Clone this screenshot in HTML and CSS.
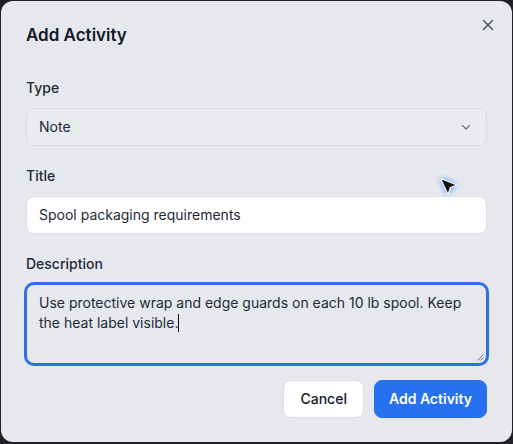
FILE: index.html
```html
<!DOCTYPE html>
<html lang="en">
<head>
<meta charset="utf-8">
<title>Add Activity</title>
<link rel="stylesheet" href="styles.css">
</head>
<body>
<div class="dialog" role="dialog" aria-labelledby="dlg-title">
  <h2 class="dialog-title" id="dlg-title">Add Activity</h2>
  <button class="close-btn" aria-label="Close">
    <svg viewBox="0 0 16 16" width="16" height="16"><path d="M3.5 3.5l9 9M12.5 3.5l-9 9" stroke="currentColor" stroke-width="1.5" stroke-linecap="round" fill="none"/></svg>
  </button>
  <form class="form">
    <div class="field">
      <label class="label">Type</label>
      <div class="select">
        <span>Note</span>
        <svg class="chevron" viewBox="0 0 16 16" width="16" height="16"><path d="M4.5 6.5l3.5 3.5 3.5-3.5" stroke="currentColor" stroke-width="1.2" stroke-linecap="round" stroke-linejoin="round" fill="none"/></svg>
      </div>
    </div>
    <div class="field">
      <label class="label">Title</label>
      <div class="input">Spool packaging requirements</div>
    </div>
    <div class="field">
      <label class="label">Description</label>
      <div class="textarea">Use protective wrap and edge guards on each 10 lb spool. Keep the heat label visible.<span class="caret"></span>
        <svg class="grip" viewBox="0 0 8 8" width="8" height="8"><path d="M7.5 1.5l-6 6M7.5 4.5l-3 3" stroke="#6b7280" stroke-width="1" fill="none"/></svg>
      </div>
    </div>
    <div class="actions">
      <button type="button" class="btn btn-secondary">Cancel</button>
      <button type="button" class="btn btn-primary">Add Activity</button>
    </div>
  </form>
  <svg class="pointer" viewBox="0 0 30 30" width="30" height="30">
    <path d="M7.5 7.5 L24 14 L17.5 16.5 L15 23.5 Z" fill="#111" stroke="#fff" stroke-width="1.2" stroke-linejoin="round"/>
  </svg>
</div>
</body>
</html>
```

FILE: styles.css
```css
* { box-sizing: border-box; }

html, body {
  margin: 0;
  padding: 0;
}

body {
  background: #202124;
  padding: 1px;
  font-family: Inter, "Noto Sans", "Liberation Sans", sans-serif;
  color: #1f2937;
  width: 513px;
  height: 444px;
  overflow: hidden;
}

.dialog {
  position: relative;
  width: 511px;
  height: 441px;
  background: #e6e8ed;
  border-radius: 12px;
  padding: 20px 25px 24px;
}

.dialog-title {
  margin: 0 0 29px;
  font-size: 17px;
  line-height: 28px;
  font-weight: 600;
  color: #111827;
}

.close-btn {
  position: absolute;
  top: 16px;
  right: 16px;
  width: 16px;
  height: 16px;
  padding: 0;
  border: 0;
  background: none;
  color: #4b5563;
  display: flex;
  cursor: pointer;
}

.form {
  display: flex;
  flex-direction: column;
  gap: 20px;
}

.field {
  display: flex;
  flex-direction: column;
  gap: 10px;
}

.label {
  font-size: 14px;
  line-height: 20px;
  font-weight: 500;
  color: #1f2937;
}

.select,
.input {
  height: 38px;
  border-radius: 8px;
  border: 1px solid #d7dae0;
  padding: 0 12px;
  font-size: 14px;
  line-height: 20px;
  color: #1f2937;
  display: flex;
  align-items: center;
}

.select {
  background: #e9ebef;
  justify-content: space-between;
}

.chevron {
  color: #6b7280;
}

.input {
  background: #ffffff;
  border-color: #dcdfe4;
}

.textarea {
  position: relative;
  height: 80px;
  border-radius: 8px;
  border: 1px solid #2b6ee6;
  box-shadow: 0 0 0 2px #2b6ee6;
  background: #e6e8ed;
  padding: 8px 12px;
  font-size: 14px;
  line-height: 20px;
  color: #1f2937;
}

.caret {
  display: inline-block;
  width: 1px;
  height: 18px;
  background: #111;
  vertical-align: -4px;
}

.grip {
  position: absolute;
  right: 2px;
  bottom: 2px;
}

.actions {
  display: flex;
  justify-content: flex-end;
  gap: 10px;
  margin-top: -4px;
}

.btn {
  height: 38px;
  padding: 0 16px;
  border-radius: 8px;
  font-family: inherit;
  font-size: 14px;
  line-height: 20px;
  white-space: nowrap;
  cursor: pointer;
}

.btn-secondary {
  background: #ffffff;
  border: 1px solid #dcdfe4;
  color: #111827;
  font-weight: 500;
}

.btn-primary {
  background: #2671f0;
  border: 1px solid #2671f0;
  color: #ffffff;
  font-weight: 600;
  padding: 0 14px;
}

.pointer {
  position: absolute;
  left: 432px;
  top: 170px;
  filter: drop-shadow(0 0 3px rgba(59, 130, 246, 0.95)) drop-shadow(0 0 7px rgba(255, 255, 255, 0.9));
  pointer-events: none;
}
```
